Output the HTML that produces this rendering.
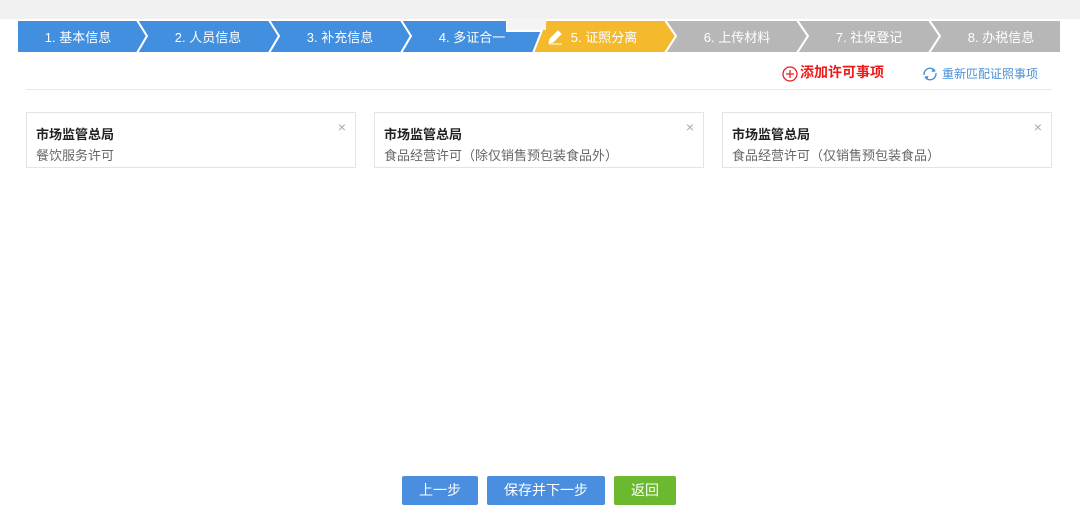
<!DOCTYPE html>
<html><head><meta charset="utf-8"><style>
body{margin:0;width:1080px;height:523px;background:#fff;position:relative;overflow:hidden;font-family:"Liberation Sans","Noto Sans CJK SC",sans-serif}
.top{position:absolute;left:0;top:0;width:1080px;height:19px;background:#f1f1f1}
.card{position:absolute;top:112px;width:328px;height:54px;border:1px solid #e3e3e8;background:#fff}
.card b{position:absolute;left:9px;top:11px;font-size:13px;color:#222}
.card span{position:absolute;left:9px;top:32px;font-size:13px;color:#666}
.card i{position:absolute;right:9px;top:6px;font-style:normal;color:#aaa;font-size:14px}
.btn{position:absolute;top:476px;height:29px;line-height:29px;text-align:center;color:#fff;font-size:14px;border-radius:2px;background:#4a8fdf}
</style></head><body>
<div class="top"></div>
<svg style="position:absolute;left:0;top:0" width="1080" height="60">
<g stroke="#fff" stroke-width="2">
<polygon points="17,20 137,20 147,36 137,53 17,53" fill="#428edf"/>
<polygon points="137,20 269,20 279,36 269,53 137,53 147,36" fill="#428edf"/>
<polygon points="269,20 401,20 411,36 401,53 269,53 279,36" fill="#428edf"/>
<polygon points="401,20 507,20 507,31 545,31 533,53 401,53 411,36" fill="#428edf"/>
<polygon points="546,20 665,20 676,36 665,53 533,53" fill="#f5b92e"/>
<polygon points="665,20 797,20 808,36 797,53 665,53 676,36" fill="#b7b7b7"/>
<polygon points="797,20 929,20 940,36 929,53 797,53 808,36" fill="#b7b7b7"/>
<polygon points="929,20 1061,20 1061,53 929,53 940,36" fill="#b7b7b7"/>
</g>
<rect x="507" y="18" width="39" height="12" fill="#f4f4f4"/>
<g fill="#fff" font-size="13" text-anchor="middle" font-family="Liberation Sans,Noto Sans CJK SC,sans-serif">
<text x="78" y="42">1. 基本信息</text><text x="208" y="42">2. 人员信息</text><text x="340" y="42">3. 补充信息</text><text x="472" y="42">4. 多证合一</text><text x="604" y="42">5. 证照分离</text><text x="737" y="42">6. 上传材料</text><text x="869" y="42">7. 社保登记</text><text x="1001" y="42">8. 办税信息</text></g>
<path d="M549 43 L550 39 L558 31 L561 34 L553 42 Z M549 44 H562" stroke="#fff" fill="#fff" stroke-width="1"/>
</svg>
<svg style="position:absolute;left:781px;top:65px" width="18" height="18"><circle cx="9" cy="9" r="7" fill="none" stroke="#e52020" stroke-width="1.3"/><path d="M9 5V13M5 9H13" stroke="#e52020" stroke-width="1.3"/></svg>
<div style="position:absolute;left:800px;top:62px;font-size:14px;font-weight:bold;color:#f01818">添加许可事项</div>
<svg style="position:absolute;left:921px;top:65px" width="18" height="18"><path d="M3 10A6 6 0 0 1 14 6M15 8A6 6 0 0 1 4 12" fill="none" stroke="#4a90d9" stroke-width="1.4"/><path d="M12 3L14.5 6.5L10.5 7Z M6 15L3.5 11.5L7.5 11Z" fill="#4a90d9"/></svg>
<div style="position:absolute;left:942px;top:65px;font-size:12px;color:#4a90d9">重新匹配证照事项</div>
<div style="position:absolute;left:26px;top:89px;width:1026px;height:1px;background:#e8e8e8"></div>
<div class="card" style="left:26px"><b>市场监管总局</b><span>餐饮服务许可</span><i>×</i></div>
<div class="card" style="left:374px"><b>市场监管总局</b><span>食品经营许可（除仅销售预包装食品外）</span><i>×</i></div>
<div class="card" style="left:722px"><b>市场监管总局</b><span>食品经营许可（仅销售预包装食品）</span><i>×</i></div>
<div class="btn" style="left:402px;width:76px">上一步</div>
<div class="btn" style="left:487px;width:118px">保存并下一步</div>
<div class="btn" style="left:614px;width:62px;background:#6cb92f">返回</div>
</body></html>
